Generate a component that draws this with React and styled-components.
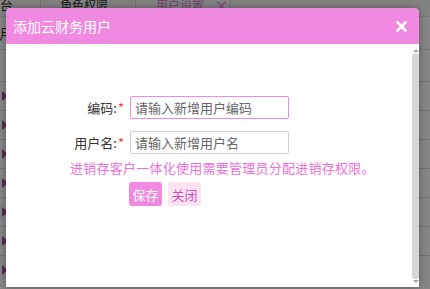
import React from 'react'
import styled, { createGlobalStyle } from 'styled-components'

const GlobalStyle = createGlobalStyle`
  html, body {
    margin: 0;
    padding: 0;
  }
  body {
    font-family: "Noto Sans CJK SC", "Liberation Sans", sans-serif;
    background: #fff;
  }
`

const rows = [0, 1, 2, 3, 4, 5, 6]

export default function App() {
  return (
    <>
      <GlobalStyle />
      <Page>
        <TabBar>
          <Tab width={41}>台</Tab>
          <Tab width={95}>角色权限</Tab>
          <Tab width={95} active>
            用户设置<TabClose>×</TabClose>
          </Tab>
        </TabBar>
        <SubHeader>月</SubHeader>
        <Table>
          {rows.map(r => (
            <Row key={r}>
              <Arrow />
            </Row>
          ))}
        </Table>
        <Overlay />
        <Modal>
          <Header>
            <Title>添加云财务用户</Title>
            <CloseButton>
              <svg width="11" height="11" viewBox="0 0 11 11">
                <path d="M1.5 1.5 L9.5 9.5 M9.5 1.5 L1.5 9.5" stroke="#fff" strokeWidth="2.6" strokeLinecap="square" />
              </svg>
            </CloseButton>
          </Header>
          <Body>
            <Content>
              <Form>
                <Label>编码:<Star>*</Star></Label>
                <Input focused placeholder="请输入新增用户编码" />
                <Label>用户名:<Star>*</Star></Label>
                <Input placeholder="请输入新增用户名" />
              </Form>
              <Hint>进销存客户一体化使用需要管理员分配进销存权限。</Hint>
              <Buttons>
                <Button primary>保存</Button>
                <Button>关闭</Button>
              </Buttons>
            </Content>
            <ScrollBar>
              <ScrollArrow />
              <Thumb />
              <ScrollArrow down />
            </ScrollBar>
          </Body>
        </Modal>
      </Page>
    </>
  )
}

const Page = styled.div`
  position: relative;
  width: 430px;
  height: 289px;
  overflow: hidden;
  background: #fff;
`

const TabBar = styled.div`
  display: flex;
  height: 24px;
  margin-top: -8px;
  background: #f7f7f7;
  border-bottom: 1px solid #e4e4e4;
`

const Tab = styled.div`
  width: ${p => p.width}px;
  display: flex;
  align-items: center;
  gap: 10px;
  padding-left: ${p => (p.active ? 20 : 19)}px;
  box-sizing: border-box;
  font-size: 12px;
  color: ${p => (p.active ? '#e07ad2' : '#333')};
  border-right: 1px solid #ddd;
  &:first-child {
    padding-left: 0;
    font-size: 13px;
  }
`

const TabClose = styled.span`
  font-size: 15px;
`

const SubHeader = styled.div`
  height: 32px;
  line-height: 32px;
  font-size: 14px;
  color: #333;
  border-bottom: 1px solid #ddd;
  margin-left: -1px;
`

const Table = styled.div`
  display: flex;
  flex-direction: column;
  padding-top: 31px;
`

const Row = styled.div`
  height: 28px;
  display: flex;
  align-items: center;
  padding-left: 2px;
  border-top: 1px solid #ddd;
`

const Arrow = styled.span`
  width: 0;
  height: 0;
  border-top: 5px solid transparent;
  border-bottom: 5px solid transparent;
  border-left: 6px solid #a050a0;
`

const Overlay = styled.div`
  position: absolute;
  inset: 0;
  background: rgba(0, 0, 0, 0.47);
`

const Modal = styled.div`
  position: absolute;
  left: 6px;
  top: 8px;
  width: 413px;
  height: 279px;
  display: flex;
  flex-direction: column;
  background: #fff;
  border-radius: 5px 5px 0 0;
  box-shadow: 0 0 8px rgba(0, 0, 0, 0.35);
  overflow: hidden;
`

const Header = styled.div`
  height: 36px;
  flex: none;
  display: flex;
  align-items: center;
  justify-content: space-between;
  padding: 0 12px 0 7px;
  background: #f08ae1;
`

const Title = styled.div`
  font-size: 14px;
  color: #fff;
`

const CloseButton = styled.div`
  display: flex;
  align-items: center;
`

const Body = styled.div`
  flex: 1;
  min-height: 0;
  display: flex;
  padding: 5px 0 4px;
`

const Content = styled.div`
  flex: 1;
  padding-top: 47px;
`

const ScrollBar = styled.div`
  width: 7px;
  display: flex;
  flex-direction: column;
  align-items: center;
  gap: 1px;
`

const ScrollArrow = styled.span`
  width: 0;
  height: 0;
  border-left: 3px solid transparent;
  border-right: 3px solid transparent;
  ${p => (p.down ? 'border-top: 3px solid #a8a8a8;' : 'border-bottom: 3px solid #a8a8a8;')}
`

const Thumb = styled.div`
  flex: 1;
  width: 7px;
  background: #d6d6d6;
  border-radius: 4px;
`

const Form = styled.div`
  display: grid;
  grid-template-columns: 118px 159px;
  column-gap: 6px;
  row-gap: 12px;
  align-items: center;
`

const Label = styled.label`
  text-align: right;
  font-size: 13px;
  color: #333;
`

const Star = styled.span`
  color: #e8473f;
  margin-left: 1px;
`

const Input = styled.input`
  height: 23px;
  box-sizing: border-box;
  padding: 0 4px;
  font-family: inherit;
  font-size: 13px;
  border: 1px solid ${p => (p.focused ? '#f08ae1' : '#cfcfcf')};
  border-radius: 2px;
  outline: none;
  &::placeholder {
    color: #666;
  }
`

const Hint = styled.div`
  margin: 4px 0 0 64px;
  font-size: 13px;
  line-height: 20px;
  letter-spacing: 0.25px;
  color: #ec6fdb;
  white-space: nowrap;
`

const Buttons = styled.div`
  display: flex;
  gap: 6px;
  margin: 4px 0 0 123px;
`

const Button = styled.button`
  width: 33px;
  height: 24px;
  padding: 0;
  border: 0;
  border-radius: 3px;
  font-family: inherit;
  font-size: 13px;
  color: ${p => (p.primary ? '#fff' : '#c84fc0')};
  background: ${p => (p.primary ? '#f08ae1' : '#fde3f1')};
`
